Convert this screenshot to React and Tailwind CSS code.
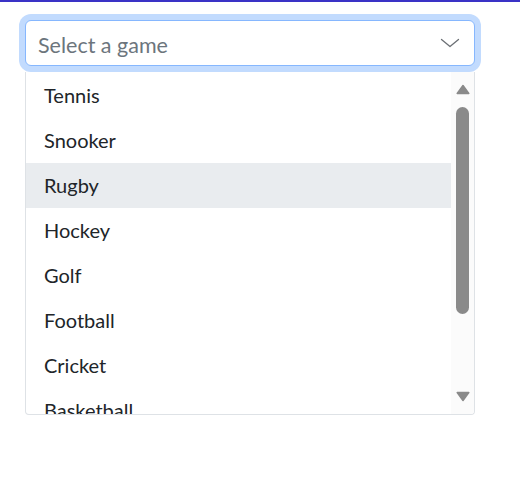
import React from "react";

const items = ["Tennis", "Snooker", "Rugby", "Hockey", "Golf", "Football", "Cricket", "Basketball"];

export default function App() {
  return (
    <div className="min-h-screen bg-white" style={{ fontFamily: "Lato, 'Open Sans', sans-serif" }}>
      <div className="h-[2px] bg-[#3a33c6]" />
      <div className="pl-[25px] pt-[18px]">
        <div className="relative z-10 flex h-[46px] w-[450px] items-center rounded-[6px] border border-[#86b7fe] bg-white pl-[12px] pr-[14px] text-[21.5px] text-[#6c757d] shadow-[0_0_0_6px_#c2dbfe]">
          <span className="pt-[3px] leading-[30px]">Select a game</span>
          <svg className="ml-auto" width="20" height="10" viewBox="0 0 20 10" fill="none">
            <polyline points="1.5,1.5 10,8.5 18.5,1.5" stroke="#6b6f74" strokeWidth="1.3" strokeLinecap="round" strokeLinejoin="round" />
          </svg>
        </div>
        <div className="mt-[6px] flex h-[343px] w-[450px] overflow-hidden rounded-b-[4px] border-x border-b border-[#dee2e6] bg-white">
          <div className="flex w-[425px] flex-col pt-[1px]">
            {items.map((it) => (
              <div
                key={it}
                className={`shrink-0 h-[45px] pl-[18px] text-[20px] leading-[45px] text-[#212529] ${it === "Rugby" ? "bg-[#e9ecef]" : ""}`}
              >
                {it}
              </div>
            ))}
          </div>
          <div className="flex w-[23px] flex-col items-center bg-[#fbfbfb]">
            <svg className="mt-[12px]" width="14" height="11" viewBox="0 0 14 11">
              <polygon points="7,1.5 12.8,9.5 1.2,9.5" fill="#8a8a8a" stroke="#8a8a8a" strokeWidth="1.5" strokeLinejoin="round" />
            </svg>
            <div className="mt-[12px] h-[207px] w-[13px] rounded-full bg-[#8a8a8a]" />
            <svg className="mt-[77px]" width="14" height="11" viewBox="0 0 14 11">
              <polygon points="1.2,1.5 12.8,1.5 7,9.5" fill="#8a8a8a" stroke="#8a8a8a" strokeWidth="1.5" strokeLinejoin="round" />
            </svg>
          </div>
        </div>
      </div>
    </div>
  );
}
